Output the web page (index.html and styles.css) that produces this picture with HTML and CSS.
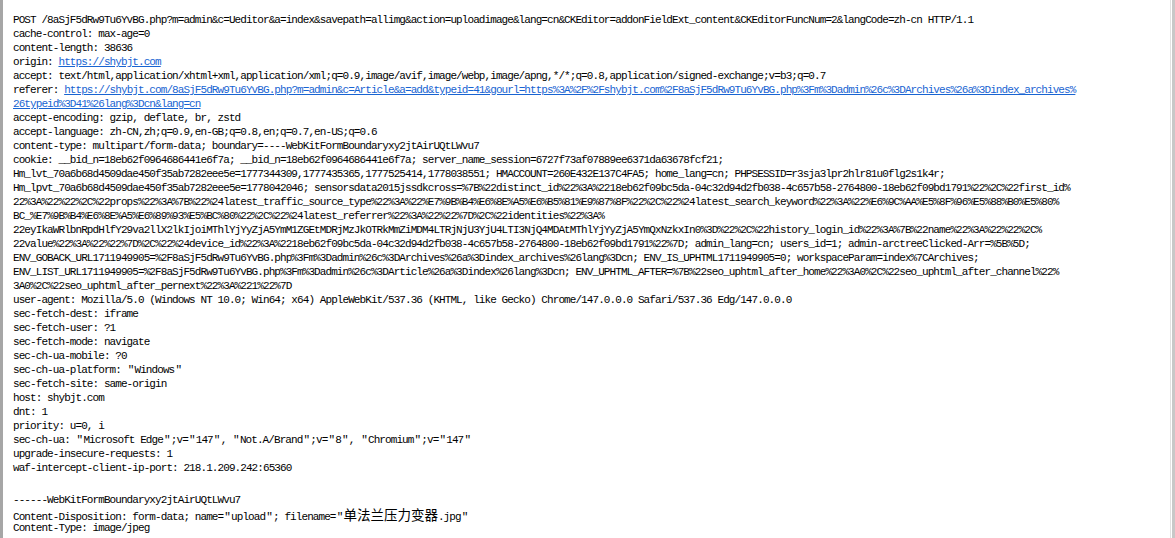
FILE: index.html
```html
<!DOCTYPE html>
<html lang="zh-CN">
<head>
<meta charset="utf-8">
<title>Request</title>
<link rel="stylesheet" href="styles.css">
</head>
<body>
<div class="frame">
  <div class="sheet">
    <div class="block">
      <div class="line">POST /8aSjF5dRw9Tu6YvBG.php?m=admin&amp;c=Ueditor&amp;a=index&amp;savepath=allimg&amp;action=uploadimage&amp;lang=cn&amp;CKEditor=addonFieldExt_content&amp;CKEditorFuncNum=2&amp;langCode=zh-cn HTTP/1.1</div>
      <div class="line">cache-control: max-age=0</div>
      <div class="line">content-length: 38636</div>
      <div class="line">origin: <span class="link">https://shybjt.com</span></div>
      <div class="line">accept: text/html,application/xhtml+xml,application/xml;q=0.9,image/avif,image/webp,image/apng,*/*;q=0.8,application/signed-exchange;v=b3;q=0.7</div>
      <div class="line">referer: <span class="link">https://shybjt.com/8aSjF5dRw9Tu6YvBG.php?m=admin&amp;c=Article&amp;a=add&amp;typeid=41&amp;gourl=https%3A%2F%2Fshybjt.com%2F8aSjF5dRw9Tu6YvBG.php%3Fm%3Dadmin%26c%3DArchives%26a%3Dindex_archives%</span></div>
      <div class="line"><span class="link">26typeid%3D41%26lang%3Dcn&amp;lang=cn</span></div>
      <div class="line">accept-encoding: gzip, deflate, br, zstd</div>
      <div class="line">accept-language: zh-CN,zh;q=0.9,en-GB;q=0.8,en;q=0.7,en-US;q=0.6</div>
      <div class="line">content-type: multipart/form-data; boundary=----WebKitFormBoundaryxy2jtAirUQtLWvu7</div>
      <div class="line">cookie: __bid_n=18eb62f0964686441e6f7a; __bid_n=18eb62f0964686441e6f7a; server_name_session=6727f73af07889ee6371da63678fcf21;</div>
      <div class="line">Hm_lvt_70a6b68d4509dae450f35ab7282eee5e=1777344309,1777435365,1777525414,1778038551; HMACCOUNT=260E432E137C4FA5; home_lang=cn; PHPSESSID=r3sja3lpr2hlr81u0flg2s1k4r;</div>
      <div class="line">Hm_lpvt_70a6b68d4509dae450f35ab7282eee5e=1778042046; sensorsdata2015jssdkcross=%7B%22distinct_id%22%3A%2218eb62f09bc5da-04c32d94d2fb038-4c657b58-2764800-18eb62f09bd1791%22%2C%22first_id%</div>
      <div class="line">22%3A%22%22%2C%22props%22%3A%7B%22%24latest_traffic_source_type%22%3A%22%E7%9B%B4%E6%8E%A5%E6%B5%81%E9%87%8F%22%2C%22%24latest_search_keyword%22%3A%22%E6%9C%AA%E5%8F%96%E5%88%B0%E5%80%</div>
      <div class="line">BC_%E7%9B%B4%E6%8E%A5%E6%89%93%E5%BC%80%22%2C%22%24latest_referrer%22%3A%22%22%7D%2C%22identities%22%3A%</div>
      <div class="line">22eyIkaWRlbnRpdHlfY29va2llX2lkIjoiMThlYjYyZjA5YmM1ZGEtMDRjMzJkOTRkMmZiMDM4LTRjNjU3YjU4LTI3NjQ4MDAtMThlYjYyZjA5YmQxNzkxIn0%3D%22%2C%22history_login_id%22%3A%7B%22name%22%3A%22%22%2C%</div>
      <div class="line">22value%22%3A%22%22%7D%2C%22%24device_id%22%3A%2218eb62f09bc5da-04c32d94d2fb038-4c657b58-2764800-18eb62f09bd1791%22%7D; admin_lang=cn; users_id=1; admin-arctreeClicked-Arr=%5B%5D;</div>
      <div class="line">ENV_GOBACK_URL1711949905=%2F8aSjF5dRw9Tu6YvBG.php%3Fm%3Dadmin%26c%3DArchives%26a%3Dindex_archives%26lang%3Dcn; ENV_IS_UPHTML1711949905=0; workspaceParam=index%7CArchives;</div>
      <div class="line">ENV_LIST_URL1711949905=%2F8aSjF5dRw9Tu6YvBG.php%3Fm%3Dadmin%26c%3DArticle%26a%3Dindex%26lang%3Dcn; ENV_UPHTML_AFTER=%7B%22seo_uphtml_after_home%22%3A0%2C%22seo_uphtml_after_channel%22%</div>
      <div class="line">3A0%2C%22seo_uphtml_after_pernext%22%3A%221%22%7D</div>
      <div class="line">user-agent: Mozilla/5.0 (Windows NT 10.0; Win64; x64) AppleWebKit/537.36 (KHTML, like Gecko) Chrome/147.0.0.0 Safari/537.36 Edg/147.0.0.0</div>
      <div class="line">sec-fetch-dest: iframe</div>
      <div class="line">sec-fetch-user: ?1</div>
      <div class="line">sec-fetch-mode: navigate</div>
      <div class="line">sec-ch-ua-mobile: ?0</div>
      <div class="line">sec-ch-ua-platform: <span class="q">"</span>Windows<span class="q">"</span></div>
      <div class="line">sec-fetch-site: same-origin</div>
      <div class="line">host: shybjt.com</div>
      <div class="line">dnt: 1</div>
      <div class="line">priority: u=0, i</div>
      <div class="line">sec-ch-ua: <span class="q">"</span>Microsoft Edge<span class="q">"</span>;v=<span class="q">"</span>147<span class="q">"</span>, <span class="q">"</span>Not.A/Brand<span class="q">"</span>;v=<span class="q">"</span>8<span class="q">"</span>, <span class="q">"</span>Chromium<span class="q">"</span>;v=<span class="q">"</span>147<span class="q">"</span></div>
      <div class="line">upgrade-insecure-requests: 1</div>
      <div class="line">waf-intercept-client-ip-port: 218.1.209.242:65360</div>
    </div>
    <div class="block part">
      <div class="line">------WebKitFormBoundaryxy2jtAirUQtLWvu7</div>
      <div class="line">Content-Disposition: form-data; name=<span class="q">"</span>upload<span class="q">"</span>; filename=<span class="q">"</span><span class="cjk">单法兰压力变器</span>.jpg<span class="q">"</span></div>
      <div class="line">Content-Type: image/jpeg</div>
    </div>
  </div>
</div>
</body>
</html>
```
FILE: styles.css
```css
html, body {
  margin: 0;
  padding: 0;
  background: #ffffff;
}

.frame {
  height: 538px;
  box-sizing: border-box;
  border-left: 3px solid #a6a6a6;
  border-right: 3px solid #c8c8c8;
  padding-right: 1px;
  overflow: hidden;
}

.sheet {
  height: 100%;
  box-sizing: border-box;
  border-right: 1px solid #e1e1e1;
  padding: 13px 0 0 10px;
  font-family: "Liberation Mono", "DejaVu Sans Mono", monospace;
  font-size: 11px;
  letter-spacing: -0.92px;
  color: #000000;
}

.line {
  white-space: pre;
  height: 14px;
  line-height: 14px;
}

.link {
  color: #1864d2;
  text-decoration: underline;
}

.part {
  margin-top: 18px;
}

.q {
  padding: 0 1.1px;
}

.cjk {
  font-family: "Noto Sans CJK SC", sans-serif;
  font-size: 13.5px;
  letter-spacing: 0;
}
```
